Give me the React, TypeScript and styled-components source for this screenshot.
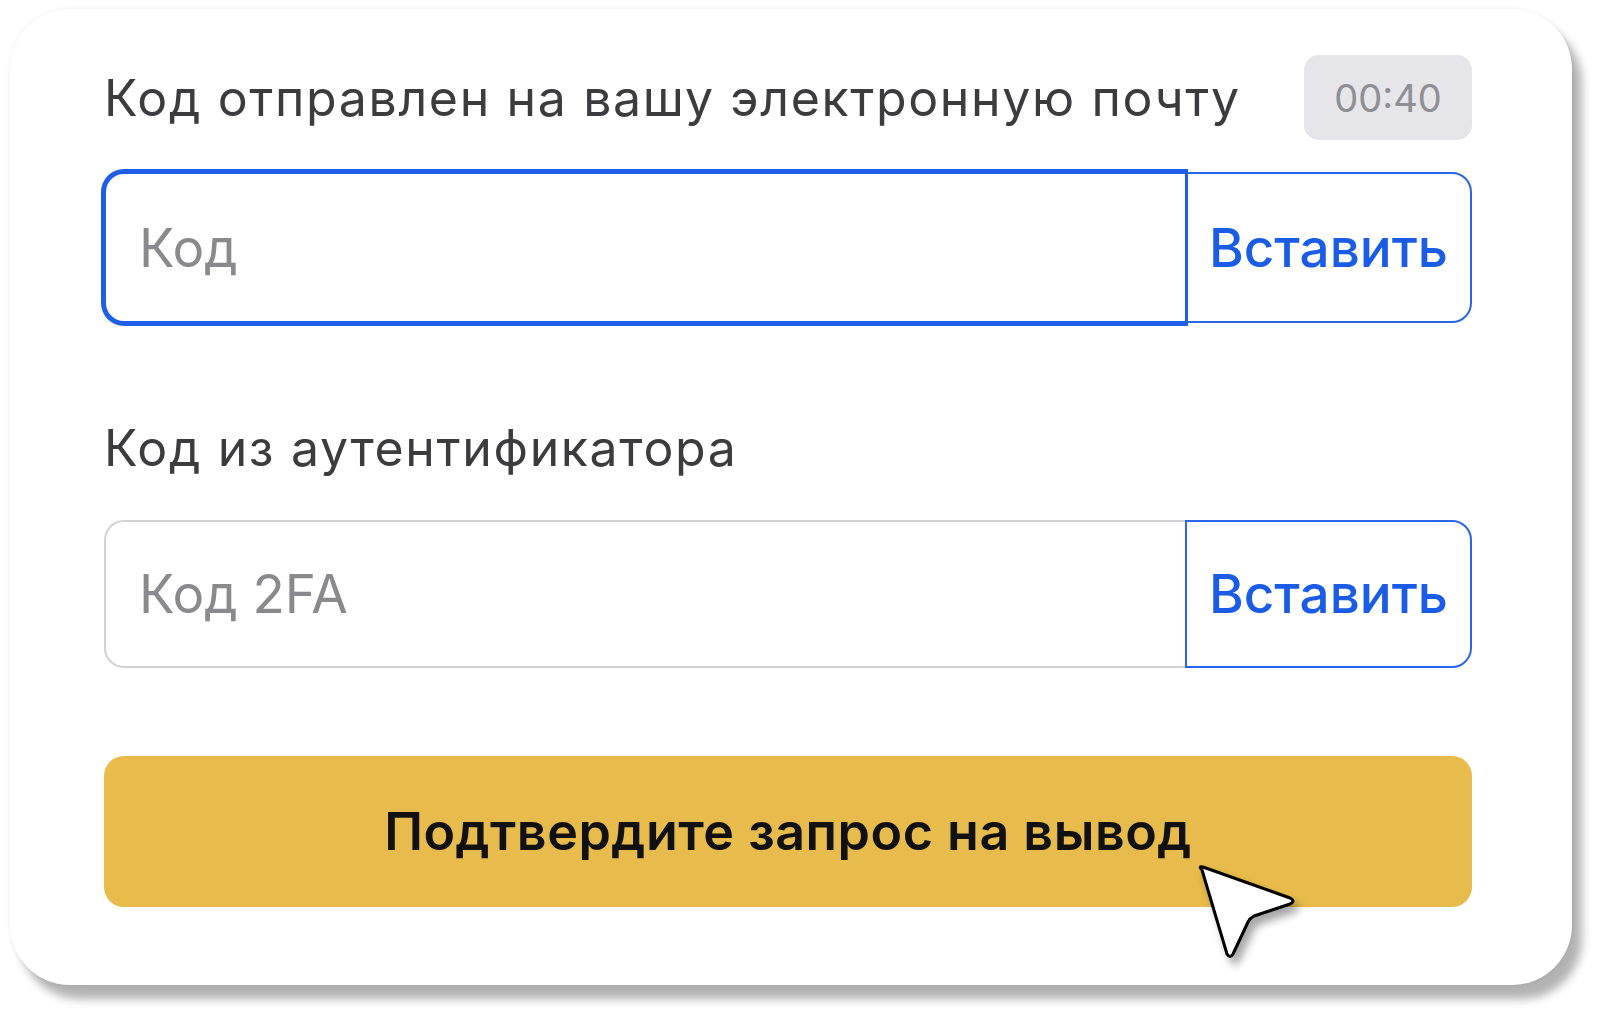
import React from "react";
import styled, { createGlobalStyle } from "styled-components";

const Global = createGlobalStyle`
  html, body { margin: 0; padding: 0; background: #ffffff; }
  body { font-family: Inter, "Noto Sans", "Liberation Sans", sans-serif; }
  * { box-sizing: border-box; }
`;

const Page = styled.div`
  width: 1600px;
  height: 1015px;
  padding: 9px 0 0 10px;
  position: relative;
  overflow: hidden;
`;

const Card = styled.div`
  width: 1562px;
  height: 976px;
  background: #ffffff;
  border-radius: 60px;
  box-shadow: 10px 14px 10px rgba(0, 0, 0, 0.3), 0 0 4px rgba(0, 0, 0, 0.08);
  padding: 46px 100px 0 94px;
  display: flex;
  flex-direction: column;
`;

const Header = styled.div`
  display: flex;
  align-items: center;
  justify-content: space-between;
  height: 85px;
`;

const Title = styled.div`
  font-size: 50px;
  line-height: 60px;
  color: #3c3c3e;
  letter-spacing: 1.65px;
`;

const Timer = styled.div`
  width: 168px;
  height: 85px;
  border-radius: 15px;
  background: #e5e5ea;
  color: #8e8e93;
  font-size: 38px;
  display: flex;
  align-items: center;
  justify-content: center;
`;

const Group = styled.div<{ $mt: number; $h: number }>`
  margin-top: ${(p) => p.$mt}px;
  display: flex;
  height: ${(p) => p.$h}px;
`;

const Field = styled.input<{ $focused?: boolean }>`
  flex: 1;
  min-width: 0;
  height: 100%;
  border: 2px solid ${(p) => (p.$focused ? "#1f5fe8" : "#d2d2d6")};
  border-right: none;
  border-radius: 20px 0 0 20px;
  padding: 0 0 0 33px;
  font-family: Inter, "Noto Sans", sans-serif;
  font-size: 53px;
  color: #222;
  outline: none;
  background: #fff;
  position: relative;
  z-index: ${(p) => (p.$focused ? 2 : 0)};
  box-shadow: ${(p) => (p.$focused ? "0 0 0 3px #1f5fe8, 3px 0 0 0 #1f5fe8" : "none")};
  &::placeholder {
    color: #8a8a8e;
  }
`;

const PasteButton = styled.button`
  width: 287px;
  height: 100%;
  border: 2px solid #2a66ea;
  border-radius: 0 20px 20px 0;
  background: #fff;
  color: #1a5ce6;
  font-family: Inter, "Noto Sans", sans-serif;
  font-size: 53px;
  font-weight: 450;
  padding: 0;
  position: relative;
  z-index: 1;
  display: flex;
  align-items: center;
  justify-content: center;
`;

const Label = styled.div`
  margin-top: 95px;
  font-size: 50px;
  line-height: 60px;
  color: #3c3c3e;
  letter-spacing: 1.65px;
`;

const Submit = styled.button`
  margin-top: 88px;
  height: 151px;
  width: 100%;
  border: none;
  border-radius: 20px;
  background: #e8bc4c;
  color: #111111;
  font-family: Inter, "Noto Sans", sans-serif;
  font-size: 52px;
  font-weight: 600;
  letter-spacing: 0.5px;
  display: flex;
  align-items: center;
  justify-content: center;
`;

const Cursor = styled.svg`
  position: absolute;
  left: 1188px;
  top: 858px;
  width: 120px;
  height: 115px;
  filter: drop-shadow(5px 7px 4px rgba(0, 0, 0, 0.35));
`;

export default function App() {
  return (
    <>
      <Global />
      <Page>
        <Card>
          <Header>
            <Title>Код отправлен на вашу электронную почту</Title>
            <Timer>00:40</Timer>
          </Header>
          <Group $mt={32} $h={151}>
            <Field $focused placeholder="Код" />
            <PasteButton>Вставить</PasteButton>
          </Group>
          <Label>Код из аутентификатора</Label>
          <Group $mt={42} $h={148}>
            <Field placeholder="Код 2FA" />
            <PasteButton>Вставить</PasteButton>
          </Group>
          <Submit>Подтвердите запрос на вывод</Submit>
        </Card>
        <Cursor viewBox="0 0 120 115">
          <path
            d="M14 12 Q10 8 15 9 L102 40 Q108 43 102 46 L66 58 Q62 60 60 64 L45 96 Q42 101 39 96 Z"
            fill="#ffffff"
            stroke="#000000"
            strokeWidth="3"
            strokeLinejoin="round"
          />
        </Cursor>
      </Page>
    </>
  );
}
